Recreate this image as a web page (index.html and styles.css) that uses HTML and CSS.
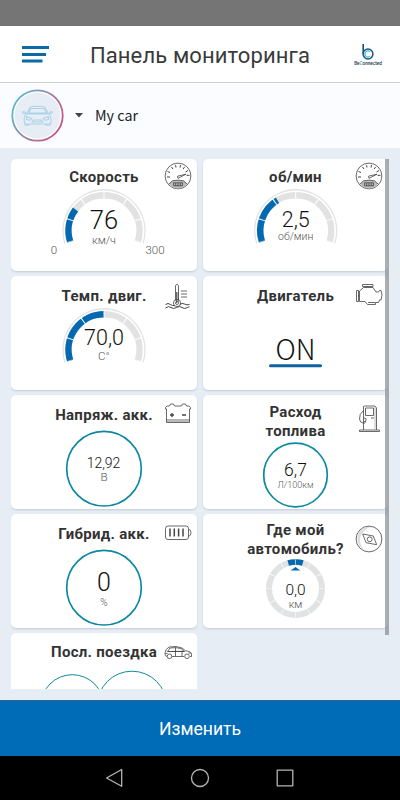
FILE: index.html
```html
<!DOCTYPE html>
<html lang="ru">
<head>
<meta charset="utf-8">
<title>Панель мониторинга</title>
<link rel="stylesheet" href="styles.css">
</head>
<body>
<svg class="defs" width="0" height="0">
  <defs>
    <g id="arc">
      <path class="rim" d="M-39 12.7A41 41 0 1 1 39 12.7"/>
      <path class="track" d="M-33.76 10.97A35.5 35.5 0 1 1 33.76 10.97"/>
    </g>
    <path id="ticks" class="ticks" pathLength="216" d="M-33.76 10.97A35.5 35.5 0 1 1 33.76 10.97"/>
    <g id="dial">
      <circle cx="14" cy="14" r="12.9"/>
      <path d="M5 22L8.500 18.800Q14 17.500 19.500 18.800L23 22Q14 31 5 22Z" fill="#bbb" stroke="none"/>
      <path d="M5 22L8.500 18.800Q14 17.500 19.500 18.800L23 22M9.500 20.800h9v3h-9zM11.700 21v3M14 21v3M16.300 21v3"/>
      <path d="M3 15h3M3.500 9.500l2.500 1M7.500 5l1.500 2M11.500 3.200l.5 2.300M16.500 3l-.5 2.500M20.500 5l-1.300 2M24 8.500l-2.400 1.500M25.500 13.300h-3" stroke-width="1"/>
      <path d="M22 12.200L13.500 14.200L14 16.400L22 12.200"/>
    </g>
  </defs>
</svg>
<div class="screen">
  <div class="status"></div>
  <header class="header">
    <svg class="menu" width="28" height="18" viewBox="0 0 28 18"><path d="M0 1.500H27M0 8.500H24M0 15H20.500" stroke="#0a6ba6" stroke-width="3"/></svg>
    <h1>Панель мониторинга</h1>
    <div class="logo">
      <svg width="14" height="18" viewBox="0 0 14 18" fill="none"><path d="M2.200 1V11" stroke="#123f62" stroke-width="1.500"/><circle cx="7" cy="11" r="4.900" stroke="#135a80" stroke-width="1.500"/><path d="M9 13.200A3 3 0 1 1 9 8.800" stroke="#47b5de" stroke-width="1.100"/></svg>
      <span>Be<i>C</i>onnected</span>
    </div>
  </header>
  <section class="vehicle">
    <svg width="53" height="53" viewBox="0 0 53 53" fill="none">
      <defs><linearGradient id="ring" x1="0" y1=".2" x2="1" y2=".8"><stop offset="0" stop-color="#55bfd7"/><stop offset=".5" stop-color="#9a83a0"/><stop offset="1" stop-color="#d04c83"/></linearGradient></defs>
      <circle cx="26.500" cy="26.500" r="25.200" fill="#fff" stroke="url(#ring)" stroke-width="1.800"/>
      <circle cx="26.500" cy="26.500" r="23" fill="#e7edf5"/>
      <g stroke="#abd3e7" stroke-width="1.100" stroke-linejoin="round"><path d="M15.500 25L19 18.500Q20 17.300 26.500 17.300T34 18.500L37.500 25M17.500 24L20 19.500H33L35.500 24ZM15 25H38Q40.500 28 40 34Q39 36 33 35H20Q14 36 13.500 34Q12.500 28 15 25ZM15 23.500L12 22.500Q11 24 13 24.500H15M38 23.500L41 22.500Q42 24 40 24.500H38M14 34v2h4v-1.500M39 34v2h-4v-1.500M15.500 27.500L21 29.500L19 31.200L15.500 30.500ZM37.500 27.500L32 29.500L34 31.200L37.500 30.500ZM21 33H32L30 31H23Z"/></g>
    </svg>
    <svg class="caret" width="8" height="5" viewBox="0 0 8 5"><path d="M0 0H8L4 4.500Z" fill="#444"/></svg>
    <span>My car</span>
  </section>
  <main class="dashboard">
    <div class="cards">
      <article class="card first">
        <h2>Скорость</h2>
        <svg class="icon" viewBox="0 0 28 28"><use href="#dial"/></svg>
        <svg class="gauge" viewBox="0 0 186 114">
          <g transform="translate(93 71.700)"><use href="#arc"/><path class="value" pathLength="216" stroke-dasharray="54.700 400" d="M-33.760 10.970A35.500 35.500 0 1 1 33.760 10.970"/><use href="#ticks"/></g>
          <text class="n" x="93" y="69.500" font-size="25.500">76</text>
          <text class="u" x="93" y="84.700" font-size="11">км/ч</text>
          <text class="u" x="43" y="94.700" font-size="11.500">0</text>
          <text class="u" x="144" y="94.700" font-size="11.500">300</text>
        </svg>
      </article>
      <article class="card first">
        <h2>об/мин</h2>
        <svg class="icon" viewBox="0 0 28 28"><use href="#dial"/></svg>
        <svg class="gauge" viewBox="0 0 186 114">
          <g transform="translate(92.700 71.700)"><use href="#arc"/><path class="value" pathLength="216" stroke-dasharray="77 400" d="M-33.760 10.970A35.500 35.500 0 1 1 33.760 10.970"/><use href="#ticks"/></g>
          <text class="n" x="92.700" y="67.700" font-size="21.500">2,5</text>
          <text class="u" x="92.700" y="81.300" font-size="10.500">об/мин</text>
        </svg>
      </article>
      <article class="card">
        <h2>Темп. двиг.</h2>
        <svg class="icon" viewBox="0 0 28 28">
          <path d="M11.500 18.500V3.500Q13 .8 14.500 3.500V18.500M12.500 10V21M14 10V20M17 9h6M17 12h6M17 15h6"/><circle cx="13" cy="21" r="3.600"/><circle cx="13" cy="21" r="1.500"/>
          <path d="M1.500 22.500q2.500-2 5 0q2 1.500 4 1M16 22.500q2-2 4.500-.5t5 .5M1.500 26q3-2.500 5.500-.5t5.500 0t5.500 0t5.500 0l2-.8" stroke-width="1"/>
        </svg>
        <svg class="gauge" viewBox="0 0 186 114">
          <g transform="translate(93 73.700)"><use href="#arc"/><path class="value" pathLength="216" stroke-dasharray="108 400" d="M-33.760 10.970A35.500 35.500 0 1 1 33.760 10.970"/><use href="#ticks"/></g>
          <text class="n" x="93" y="69.200" font-size="21.500">70,0</text>
          <text class="u" x="93" y="84" font-size="11.500">C°</text>
        </svg>
      </article>
      <article class="card">
        <h2>Двигатель</h2>
        <svg class="icon" viewBox="0 0 28 28">
          <path d="M4.500 9L8.500 5.500H18L21 10H23.500L24.500 8.500H26Q28 13 26 18H24.500L23.500 20.500H20.500V22.500H12.500L10 19.500H4.500ZM7.500 2.500H18V4.500H7.500ZM11 4.500v1M15 4.500v1M1.500 8.500h2v11h-2zM3.500 14h1M13 20.500h7"/>
        </svg>
        <svg class="gauge" viewBox="0 0 186 114">
          <text class="n on" x="92.500" y="83.700" font-size="28" textLength="40" lengthAdjust="spacingAndGlyphs">ON</text>
          <path d="M67.500 89.700H117.500" stroke="#0f639f" stroke-width="3" stroke-linecap="round"/>
        </svg>
      </article>
      <article class="card">
        <h2>Напряж. акк.</h2>
        <svg class="icon" viewBox="0 0 28 28">
          <path d="M1.500 8V6.500L3 5H5.500L6.500 3H9.500L10.500 5H17.500L18.500 3H21.500L22.500 5H25L26.500 6.500V8H25.500V21.500H2.500V8ZM2.500 19h23"/><path d="M3 19.500H25V21H3Z" fill="#bbb" stroke="none"/><path d="M6 14h4M8 12v4M18 14h4" stroke-width="1.400"/>
        </svg>
        <svg class="gauge" viewBox="0 0 186 114">
          <circle class="ring" cx="93" cy="73.700" r="37.300"/>
          <text class="n" x="92.500" y="73" font-size="14">12,92</text>
          <text class="u" x="93" y="86" font-size="11.500">В</text>
        </svg>
      </article>
      <article class="card">
        <h2 class="two fuel">Расход<br>топлива</h2>
        <svg class="icon" viewBox="0 0 28 28">
          <path d="M8.500 5.500Q9 5 10 5H20L21.500 7V29M8.500 5.500V29M10.500 7H18.500V14.500H10.500ZM4.500 29V30.500H24.500V29ZM8.500 9.500Q4 13 4.500 18Q5 22 8 22M9 17q3 0 2 2.500q-3 1-2 3.500M16 17h3M10.500 20v1.500"/><path d="M20 6v22" stroke="#aaa"/>
        </svg>
        <svg class="gauge" viewBox="0 0 186 114">
          <circle class="ring" cx="92.500" cy="80" r="31.800"/>
          <text class="n" x="92.500" y="81.300" font-size="17.500">6,7</text>
          <text class="u" x="92.500" y="92.700" font-size="9">Л/100км</text>
        </svg>
      </article>
      <article class="card">
        <h2>Гибрид. акк.</h2>
        <svg class="icon" viewBox="0 0 28 28">
          <rect x="1.500" y="6" width="23" height="13.500" rx="2.500"/><path d="M24.500 9q2.500.5 2.500 3.700t-2.500 3.700"/><path d="M6 8.500v8M10.300 8.500v8M14.600 8.500v8M19 8.500v8" stroke-width="1.500"/>
        </svg>
        <svg class="gauge" viewBox="0 0 186 114">
          <circle class="ring" cx="93" cy="73.700" r="37.300"/>
          <text class="n" x="93" y="76.700" font-size="25">0</text>
          <text class="u" x="93" y="91.700" font-size="10">%</text>
        </svg>
      </article>
      <article class="card">
        <h2 class="two">Где мой<br>автомобиль?</h2>
        <svg class="icon compass" viewBox="0 0 28 28">
          <circle cx="14" cy="14" r="12.900"/><path d="M16 2Q5 1 2.500 11Q2 21 9 25Q1 14 9 6Q12 3 16 2Z" fill="#ddd" stroke="none"/><path d="M7.700 9L18.300 11L21.700 19.700L11 17.700Z"/><circle cx="14.700" cy="14.300" r="2.400"/>
        </svg>
        <svg class="gauge" viewBox="0 0 186 114">
          <g transform="translate(92.500 74.500)" fill="none">
            <circle r="26.500" stroke="#e1e2e3" stroke-width="6"/>
            <path d="M-7.300 -25.500A26.500 26.500 0 0 1 7.300 -25.500" stroke="#0569b2" stroke-width="5.600"/>
            <circle r="26.500" stroke="#fff" stroke-width="5" pathLength="360" stroke-dasharray="1.500 28.500" stroke-dashoffset=".75"/>
            <path d="M-4.800 -18L0 -21.500L4.800 -18Z" fill="#0569b2"/>
          </g>
          <text class="n" x="92.500" y="80.500" font-size="15.500">0,0</text>
          <text class="u" x="92.500" y="94" font-size="11">км</text>
        </svg>
      </article>
      <article class="card last">
        <h2>Посл. поездка</h2>
        <svg class="icon" viewBox="0 0 28 28">
          <path d="M3 17.500Q.5 17 1 14Q1.500 10 5 8Q13 6.500 18 9L21.500 11.800Q27 12.300 27.500 15V17.500H26M8 17.500H20M3.500 12.500L6 9Q12 8 17 9.500L20 12.300ZM11.500 8.500V17M3.500 12.500H21M18 13v4M1.500 14.500h2M24.500 14h2.500"/><circle cx="5.500" cy="17.300" r="2.300"/><circle cx="23" cy="17.300" r="2.300"/>
        </svg>
        <svg class="gauge" viewBox="0 0 186 114">
          <circle class="ring thin" cx="61.300" cy="73.200" r="31.500"/>
          <circle class="ring thin" cx="121" cy="73" r="34.800"/>
        </svg>
      </article>
    </div>
    <div class="scrollbar"></div>
  </main>
  <button class="edit">Изменить</button>
  <nav class="nav">
    <svg width="18" height="20" viewBox="0 0 18 20"><path d="M16.700 1.500V18.300L1.500 10Z"/></svg>
    <svg width="20" height="20" viewBox="0 0 20 20"><circle cx="10" cy="10" r="8.500"/></svg>
    <svg width="18" height="20" viewBox="0 0 18 20"><rect x="1.200" y="2.200" width="15.600" height="15.600"/></svg>
  </nav>
</div>
</body>
</html>
```
FILE: styles.css
```css
* { box-sizing: border-box; }
body { margin: 0; font-family: Roboto, "Liberation Sans", sans-serif; }
.defs { position: absolute; }
.screen { width: 400px; height: 800px; display: flex; flex-direction: column; background: #e7edf5; overflow: hidden; }
.status { height: 26px; background: #757575; flex: none; }
.header { height: 57px; flex: none; display: grid; grid-template-columns: 50px 1fr 50px; align-items: center; background: #fff; border-bottom: 1px solid #cfd0d2; }
.menu { margin-left: 22px; margin-top: 2px; }
h1 { margin: 2px 0 0; font-size: 22px; font-weight: 400; letter-spacing: 0.12px; color: #3a3a3a; text-align: center; white-space: nowrap; }
.logo { display: flex; flex-direction: column; align-items: center; width: 28px; margin-left: 4px; }
.logo svg { display: block; }
.logo span { font-size: 4.6px; line-height: 5px; color: #234; font-weight: 500; }
.logo i { font-style: normal; color: #3ba6d0; }
.vehicle { height: 65px; flex: none; display: flex; align-items: center; padding-left: 11px; background: #fafcff; }
.vehicle .caret { margin-left: 11px; }
.vehicle span { margin: 0 0 2px 12px; font: 14.3px "Noto Sans CJK SC", "Noto Sans", sans-serif; color: #222; }
.dashboard { height: 552px; flex: none; padding: 11px 12px 0 11px; position: relative; }
.cards { height: 530px; overflow: hidden; display: grid; grid-template-columns: 186px 185px; grid-template-rows: 112px 114px 114px 114px 56px; gap: 5px 6px; }
.card { display: grid; grid-template: minmax(0, 1fr) / minmax(0, 1fr); background: #fff; border-radius: 5px; box-shadow: 0 1px 2px #c3cbd7; overflow: hidden; }
.card > * { grid-area: 1 / 1; }
.card.last { border-radius: 5px 5px 0 0; box-shadow: none; }
h2 { margin: 11px 0 0; font-size: 15px; line-height: 19px; font-weight: 700; letter-spacing: 0.3px; color: #333; text-align: center; }
h2.two { margin-top: 7px; }
h2.fuel { margin-top: 8px; }
.first h2 { margin-top: 9px; }
.last h2 { margin-top: 10px; }
.icon { width: 28px; height: 28px; margin: 6px 5px 0 0; justify-self: end; overflow: visible; fill: none; stroke: #444; stroke-width: 0.8; stroke-linejoin: round; }
.first .icon { margin-top: 3px; }
.icon.compass { margin-top: 11px; }
.gauge { width: 186px; height: 114px; }
.rim { fill: none; stroke: #e1e3e5; stroke-width: 1.3; }
.track { fill: none; stroke: #e2e2e3; stroke-width: 6.5; }
.value { fill: none; stroke: #0569b2; stroke-width: 6.5; }
.ticks { fill: none; stroke: #fff; stroke-width: 7; stroke-dasharray: 1.6 34.4; stroke-dashoffset: 0.8; }
.ring { fill: none; stroke: #0c89a0; stroke-width: 1.7; }
.ring.thin { stroke-width: 1; }
text { text-anchor: middle; font-weight: 300; }
.n { fill: #111; }
.on { font-family: "Noto Sans CJK SC", Roboto, sans-serif; }
.u { fill: #555; }
.scrollbar { position: absolute; left: 385px; top: 11px; width: 4px; height: 476px; background: #8b8f97; opacity: 0.72; }
.edit { height: 56px; flex: none; border: 0; border-top: 1px solid #27659a; padding: 0; background: #006cb8; color: #fff; font: 17.6px Roboto, sans-serif; }
.nav { height: 44px; flex: none; display: flex; justify-content: space-between; align-items: center; padding: 0 106px 0 105px; background: #000; }
.nav svg { fill: none; stroke: #b5b5b5; stroke-width: 1.3; stroke-linejoin: round; }
```
